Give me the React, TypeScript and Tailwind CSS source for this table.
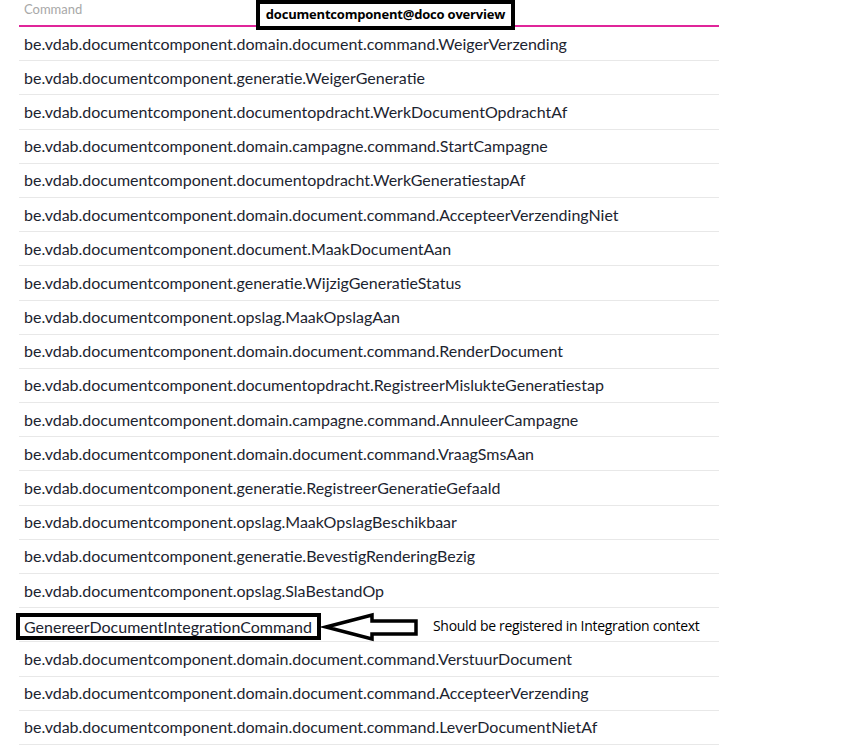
const commands = [
  "be.vdab.documentcomponent.domain.document.command.WeigerVerzending",
  "be.vdab.documentcomponent.generatie.WeigerGeneratie",
  "be.vdab.documentcomponent.documentopdracht.WerkDocumentOpdrachtAf",
  "be.vdab.documentcomponent.domain.campagne.command.StartCampagne",
  "be.vdab.documentcomponent.documentopdracht.WerkGeneratiestapAf",
  "be.vdab.documentcomponent.domain.document.command.AccepteerVerzendingNiet",
  "be.vdab.documentcomponent.document.MaakDocumentAan",
  "be.vdab.documentcomponent.generatie.WijzigGeneratieStatus",
  "be.vdab.documentcomponent.opslag.MaakOpslagAan",
  "be.vdab.documentcomponent.domain.document.command.RenderDocument",
  "be.vdab.documentcomponent.documentopdracht.RegistreerMislukteGeneratiestap",
  "be.vdab.documentcomponent.domain.campagne.command.AnnuleerCampagne",
  "be.vdab.documentcomponent.domain.document.command.VraagSmsAan",
  "be.vdab.documentcomponent.generatie.RegistreerGeneratieGefaald",
  "be.vdab.documentcomponent.opslag.MaakOpslagBeschikbaar",
  "be.vdab.documentcomponent.generatie.BevestigRenderingBezig",
  "be.vdab.documentcomponent.opslag.SlaBestandOp",
  "GenereerDocumentIntegrationCommand",
  "be.vdab.documentcomponent.domain.document.command.VerstuurDocument",
  "be.vdab.documentcomponent.domain.document.command.AccepteerVerzending",
  "be.vdab.documentcomponent.domain.document.command.LeverDocumentNietAf",
]

const flagged = "GenereerDocumentIntegrationCommand"

function FlaggedRow({ name }: { name: string }) {
  return (
    <>
      {/* box drawn round the odd one out */}
      <span className="-ml-[4px] pl-[4px] pr-[5px] mt-[4px] leading-[19px] outline-4 outline-black">
        {name}
      </span>
      <svg className="ml-[3px] mt-[4px] shrink-0" width="100" height="35" viewBox="0 0 100 35" aria-hidden="true">
        <polygon
          points="6,18 52,6 52,12 96,12 96,25 52,25 52,30"
          fill="white"
          stroke="black"
          strokeWidth="3.5"
        />
      </svg>
      <span className="ml-[13px] mt-[2px] text-[14px] text-black font-['Open_Sans',sans-serif] tracking-[-0.3px]">
        Should be registered in Integration context
      </span>
    </>
  )
}

export default function App() {
  return (
    <div className="w-[845px] h-[746px] bg-white overflow-hidden font-['Lato',sans-serif]">
      <div className="ml-[19px] w-[700px]">
        <div className="relative h-[27px] border-b-2 border-[#e0259a] px-[5px]">
          <span className="block text-[13px] leading-[18px] text-[#a8a8a8]">Command</span>
          {/* label pasted over the header */}
          <div className="absolute left-[237px] top-0 w-[259px] h-[30px] border-4 border-black bg-white flex items-center justify-center">
            <span className="text-[13px] font-bold text-black font-['Open_Sans',sans-serif] tracking-[-0.2px]">
              documentcomponent@doco overview
            </span>
          </div>
        </div>
        {commands.map((c) => (
          <div
            key={c}
            className="h-[34.2px] border-b border-[#e8e8e8] px-[5px] flex items-center text-[16px] text-[#1c2430]"
          >
            {c === flagged ? <FlaggedRow name={c} /> : <span>{c}</span>}
          </div>
        ))}
      </div>
    </div>
  )
}
